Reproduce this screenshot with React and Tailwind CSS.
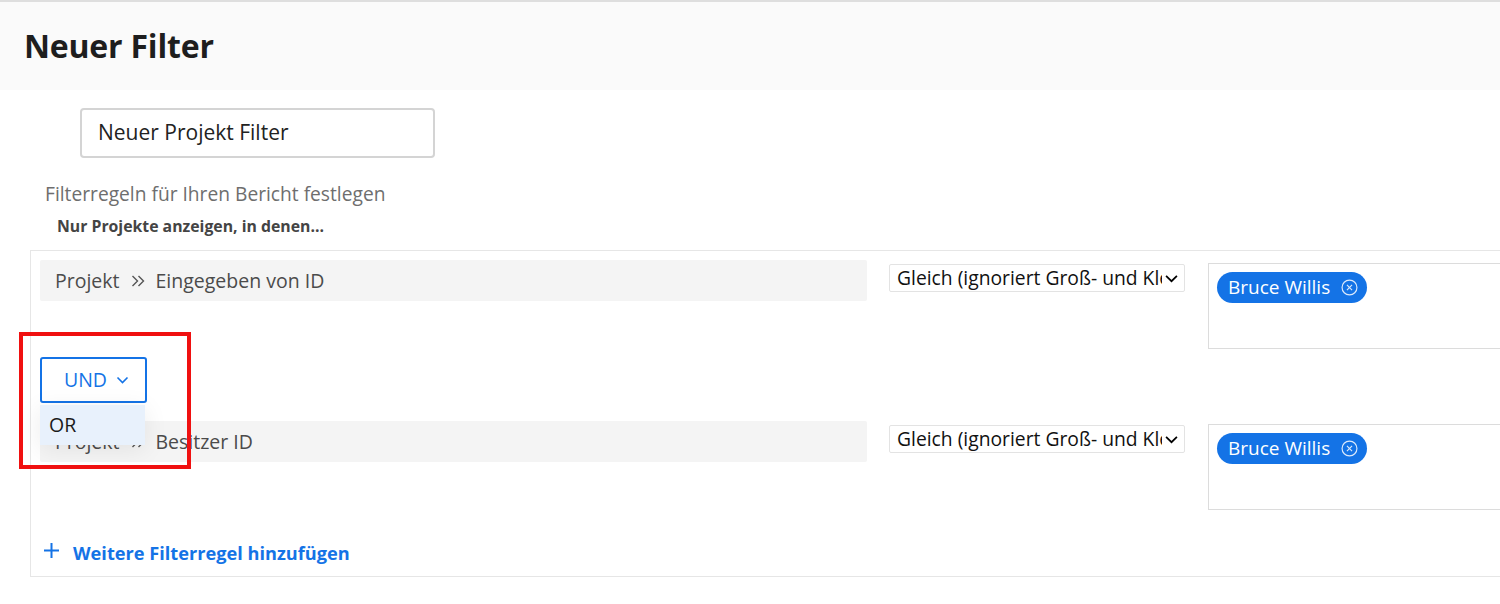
import React from 'react';

const Chevron = ({ className }) => (
  <svg viewBox="0 0 12 8" className={className} fill="none" stroke="currentColor" strokeWidth="1.6">
    <path d="M1 1.5 L6 6.5 L11 1.5" />
  </svg>
);

const DoubleChevron = () => (
  <svg viewBox="0 0 14 12" className="w-[14px] h-[12px] mx-[11px]" fill="none" stroke="#555" strokeWidth="1.4">
    <path d="M1.5 1 L6.5 6 L1.5 11 M7.5 1 L12.5 6 L7.5 11" />
  </svg>
);

const ClearIcon = () => (
  <svg viewBox="0 0 16 16" className="w-[17px] h-[17px]" fill="none" stroke="currentColor" strokeWidth="1.1">
    <circle cx="8" cy="8" r="7" />
    <path d="M5.6 5.6 L10.4 10.4 M10.4 5.6 L5.6 10.4" />
  </svg>
);

const FieldPath = ({ field }) => (
  <div className="w-[827px] shrink-0 h-[41px] bg-[#f4f4f4] rounded-[2px] flex items-center pl-[15px] text-[19.5px] text-[#4b4b4b]">
    <span>Projekt</span>
    <DoubleChevron />
    <span>{field}</span>
  </div>
);

const OperatorSelect = () => (
  <div className="ml-[22px] mt-[4px] w-[296px] shrink-0 h-[28px] bg-white border border-[#e3e3e3] rounded-[2px] flex items-center pl-[7px] pr-[6px] text-[19.3px] text-[#111]">
    <span className="flex-1 overflow-hidden whitespace-nowrap">Gleich (ignoriert Groß- und Kleinschreibung)</span>
    <Chevron className="w-[13px] h-[9px] ml-[3px] text-black" />
  </div>
);

const ValueBox = () => (
  <div className="ml-[23px] mt-[3px] flex-1 min-w-0 h-[86px] border border-[#dcdcdc] pl-[8px] pt-[8px]">
    <span className="inline-flex items-center h-[31px] pl-[11px] pr-[9px] rounded-full bg-[#1473e6] text-white text-[19px]">
      Bruce Willis
      <span className="ml-[11px] text-[#dbe9fb]"><ClearIcon /></span>
    </span>
  </div>
);

const Rule = ({ field }) => (
  <div className="flex items-start h-[89px]">
    <FieldPath field={field} />
    <OperatorSelect />
    <ValueBox />
  </div>
);

export default function App() {
  return (
    <div className="w-[1500px] h-[604px] overflow-hidden bg-white relative font-['Open_Sans',sans-serif]">
      <div className="h-[2px] bg-[#dedede]" />
      <header className="h-[88px] bg-[#fafafa] flex items-center pl-[24px]">
        <h1 className="text-[32px] font-bold text-[#1e1e1e] tracking-[-0.2px]">Neuer Filter</h1>
      </header>

      <div className="pl-[80px] pt-[18px]">
        <div className="w-[355px] h-[50px] border-2 border-[#d4d4d4] rounded-[4px] flex items-center pl-[16px] text-[21px] text-[#222]">
          Neuer Projekt Filter
        </div>
      </div>

      <p className="ml-[45px] mt-[24px] text-[19.2px] leading-[24px] text-[#6e6e6e]">
        Filterregeln für Ihren Bericht festlegen
      </p>
      <p className="ml-[57px] mt-[10px] text-[15.8px] leading-[20px] font-bold text-[#444]">
        Nur Projekte anzeigen, in denen...
      </p>

      <div className="ml-[30px] mt-[14px] w-[1560px] h-[327px] border border-[#e6e6e6] pl-[9px] pt-[9px]">
        <Rule field="Eingegeben von ID" />

        <div className="relative mt-[8px] h-[46px]">
          <button className="w-[107px] h-[46px] border-2 border-[#1473e6] rounded-[3px] bg-white flex items-center justify-center gap-[9px] pl-[6px] text-[19.5px] text-[#1473e6]">
            UND
            <Chevron className="w-[13px] h-[8px]" />
          </button>
          <div className="absolute left-0 top-[48px] z-10 w-[105px] h-[40px] bg-[#e8f1fc] flex items-center pl-[9px] text-[19.5px] text-[#1b1b1b] shadow-[0_4px_24px_rgba(0,0,0,0.08)]">
            OR
          </div>
        </div>

        <div className="mt-[18px]">
          <Rule field="Besitzer ID" />
        </div>

        <div className="flex items-center mt-[30px] ml-[4px] text-[#1473e6]">
          <svg viewBox="0 0 15 15" className="w-[15px] h-[15px] -mt-[6px]" fill="none" stroke="currentColor" strokeWidth="2">
            <path d="M7.5 0 V15 M0 7.5 H15" />
          </svg>
          <span className="ml-[14px] text-[18.2px] font-bold">Weitere Filterregel hinzufügen</span>
        </div>
      </div>

      <div className="absolute left-[19px] top-[332px] w-[172px] h-[137px] border-4 border-[#f01010] pointer-events-none" />
    </div>
  );
}
